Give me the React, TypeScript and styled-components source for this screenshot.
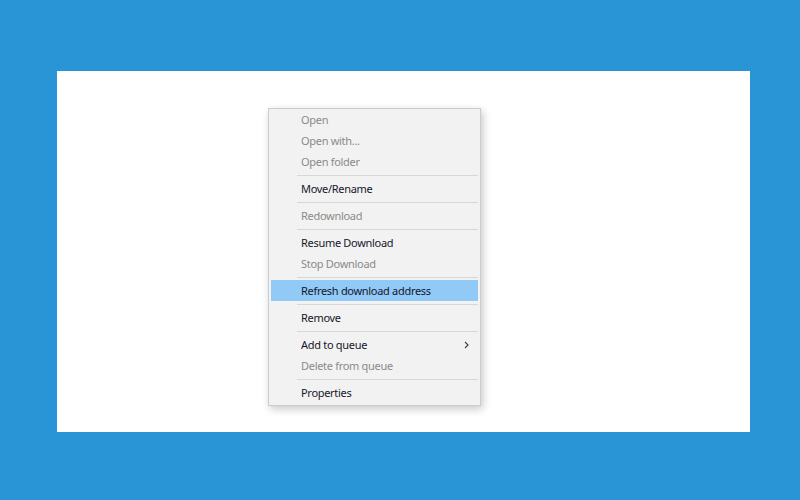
import React from 'react';
import styled, { createGlobalStyle } from 'styled-components';

const GlobalStyle = createGlobalStyle`
  html, body {
    margin: 0;
    padding: 0;
    background: #2994d6;
  }
`

const Stage = styled.div`
  width: 800px;
  height: 500px;
  box-sizing: border-box;
  padding: 71px 50px 68px 57px;
  background: #2994d6;
`

const Sheet = styled.div`
  position: relative;
  width: 693px;
  height: 361px;
  background: #ffffff;
`

const Menu = styled.ul`
  position: absolute;
  left: 211px;
  top: 37px;
  width: 213px;
  box-sizing: border-box;
  margin: 0;
  padding: 0 2px 2px;
  list-style: none;
  background: #f2f2f2;
  border: 1px solid #cccccc;
  box-shadow: 2px 3px 8px rgba(0, 0, 0, 0.22);
  font-family: "Noto Sans", "Open Sans", sans-serif;
  font-size: 11px;
  letter-spacing: -0.3px;
`

const Item = styled.li<{ $disabled?: boolean; $active?: boolean }>`
  display: flex;
  align-items: center;
  justify-content: space-between;
  height: 21px;
  padding: 0 9px 0 30px;
  color: ${p => (p.$disabled ? '#8a8a8a' : '#17172a')};
  background: ${p => (p.$active ? '#91c9f7' : 'transparent')};
  white-space: nowrap;
`

const Separator = styled.li`
  height: 1px;
  margin: 3px 0 2px 26px;
  background: #d7d7d7;
`

const Chevron = () => (
  <svg width="5" height="8" viewBox="0 0 5 8">
    <path d="M1 1l3 3-3 3" fill="none" stroke="#444" strokeWidth="1.2" />
  </svg>
)

const App = () => {
  return (
    <Stage>
      <GlobalStyle />
      <Sheet>
        <Menu>
          <Item $disabled>Open</Item>
          <Item $disabled>Open with...</Item>
          <Item $disabled>Open folder</Item>
          <Separator />
          <Item>Move/Rename</Item>
          <Separator />
          <Item $disabled>Redownload</Item>
          <Separator />
          <Item>Resume Download</Item>
          <Item $disabled>Stop Download</Item>
          <Separator />
          <Item $active>Refresh download address</Item>
          <Separator />
          <Item>Remove</Item>
          <Separator />
          <Item>Add to queue<Chevron /></Item>
          <Item $disabled>Delete from queue</Item>
          <Separator />
          <Item>Properties</Item>
        </Menu>
      </Sheet>
    </Stage>
  )
}

export default App;
